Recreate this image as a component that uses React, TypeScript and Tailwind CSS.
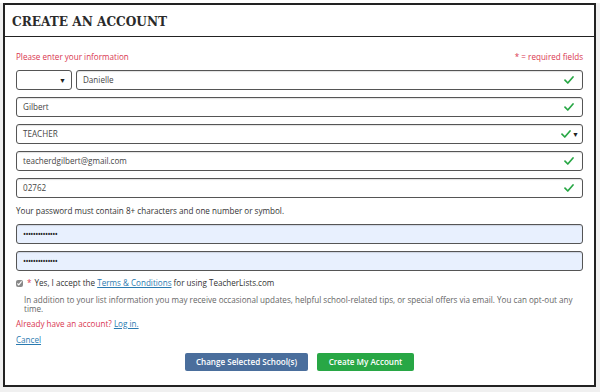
import { useState } from 'react';

const Check = () => (
  <svg width="10" height="8" viewBox="0 0 10 8" className="shrink-0">
    <path d="M1 4.2 L3.8 7 L9 1" fill="none" stroke="#28a745" strokeWidth="1.7" strokeLinecap="round" strokeLinejoin="round" />
  </svg>
);

const Arrow = () => <span className="block text-[7px] leading-[7px] text-[#222]">▼</span>;

function Field({ value, check = true, select = false, pw = false }: { value: string; check?: boolean; select?: boolean; pw?: boolean }) {
  return (
    <div
      className={`flex h-[20px] items-center rounded-[3px] border border-[#555] pl-[6px] shadow-[inset_0_1px_1px_rgba(0,0,0,0.12)] ${select ? 'pr-[3px]' : 'pr-[8px]'} ${pw ? 'bg-[#e8f0fe]' : 'bg-white'}`}
    >
      <span className={`flex-1 text-[8.1px] ${pw ? 'tracking-[-0.6px] text-[#222]' : 'text-[#444]'}`}>{value}</span>
      {check && <Check />}
      {select && (
        <span className="ml-[1px] flex items-center">
          <Arrow />
        </span>
      )}
    </div>
  );
}

export default function App() {
  const [agree] = useState(true);
  return (
    <div className="h-[392px] w-[600px] bg-[#f0f0f0] font-['Open_Sans',sans-serif]">
      <div className="h-[3px] bg-white" />
      <div className="ml-[3px] flex h-[384px] w-[593px] flex-col border-2 border-[#222] bg-white">
        <div className="flex h-[32px] shrink-0 items-center border-b border-[#222] px-[7px] pt-[1px]">
          <h1 className="font-['DejaVu_Serif_Condensed','DejaVu_Serif',serif] text-[13.5px] font-bold text-[#2a2a2a]">CREATE AN ACCOUNT</h1>
        </div>

        <div className="flex flex-col px-[11px] pt-[14px]">
          <div className="flex justify-between text-[8.1px] leading-[12px] text-[#d9364f]">
            <span>Please enter your information</span>
            <span>* = required fields</span>
          </div>

          <div className="mt-[7px] flex flex-col gap-[7px]">
            <div className="flex gap-[4px]">
              <div className="flex h-[20px] w-[56px] items-center justify-end rounded-[3px] border border-[#555] bg-white pr-[5px]">
                <Arrow />
              </div>
              <div className="flex-1">
                <Field value="Danielle" />
              </div>
            </div>
            <Field value="Gilbert" />
            <Field value="TEACHER" select />
            <Field value="teacherdgilbert@gmail.com" />
            <Field value="02762" />
          </div>

          <p className="mt-[7px] text-[8.1px] leading-[12px] text-[#333]">
            Your password must contain 8+ characters and one number or symbol.
          </p>

          <div className="mt-[7px] flex flex-col gap-[7px]">
            <Field value="••••••••••••••" check={false} pw />
            <Field value="••••••••••••••" check={false} pw />
          </div>

          <div className="mt-[6px] flex items-center text-[8.1px] leading-[12px] text-[#333]">
            <input type="checkbox" checked={agree} readOnly className="mr-[4px] h-[7px] w-[7px] accent-[#888]" />
            <span className="mr-[3px] text-[#d9364f]">*</span>
            <span>
              Yes, I accept the <span className="text-[#2a7ab0] underline">Terms &amp; Conditions</span> for using TeacherLists.com
            </span>
          </div>

          <p className="mt-[6px] pl-[8px] text-[8.1px] leading-[9px] text-[#666]">
            In addition to your list information you may receive occasional updates, helpful school-related tips, or special offers via email. You can opt-out any time.
          </p>

          <p className="mt-[5px] text-[8.1px] leading-[12px] text-[#d9364f]">
            Already have an account? <span className="text-[#2a7ab0] underline">Log in.</span>
          </p>

          <p className="mt-[4px] text-[8.1px] leading-[12px] text-[#2a7ab0] underline">Cancel</p>

          <div className="mt-[7px] flex justify-center gap-[9px]">
            <button className="h-[18px] w-[123px] rounded-[2px] bg-[#4a6e9c] text-[8.1px] font-semibold text-white">Change Selected School(s)</button>
            <button className="h-[18px] w-[97px] rounded-[2px] bg-[#28a745] text-[8.1px] font-semibold text-white">Create My Account</button>
          </div>
        </div>
      </div>
    </div>
  );
}
